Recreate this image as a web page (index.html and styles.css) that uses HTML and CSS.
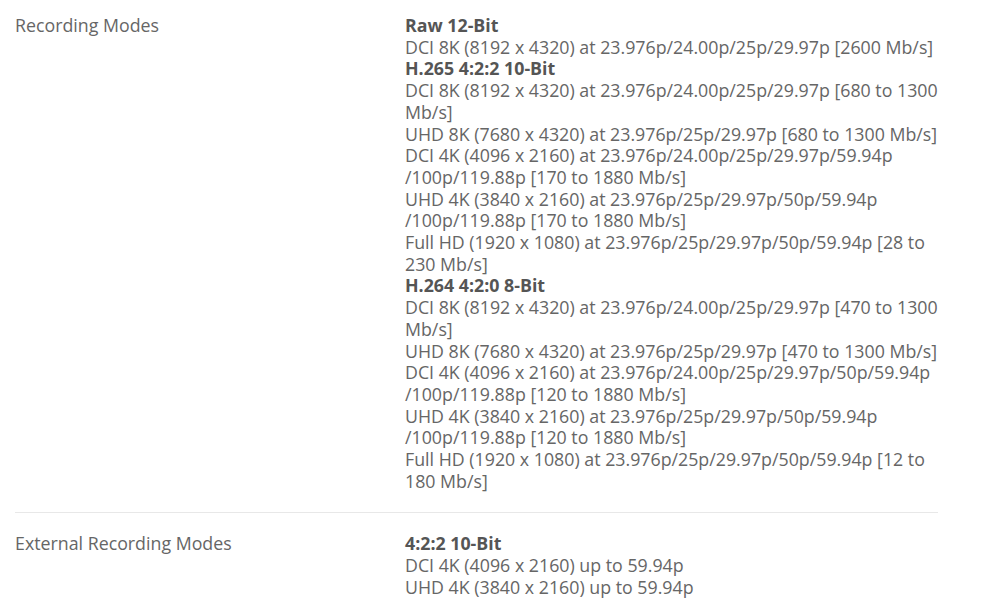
FILE: index.html
```html
<!DOCTYPE html>
<html>
<head>
<meta charset="utf-8">
<link rel="stylesheet" href="styles.css">
</head>
<body>
<div class="specs">
  <div class="row">
    <div class="label">Recording Modes</div>
    <div class="value">
      <strong>Raw 12-Bit</strong><br>
      DCI 8K (8192 x 4320) at 23.976p/24.00p/25p/29.97p [2600 Mb/s]<br>
      <strong>H.265 4:2:2 10-Bit</strong><br>
      DCI 8K (8192 x 4320) at 23.976p/24.00p/25p/29.97p [680 to 1300<br>Mb/s]<br>
      UHD 8K (7680 x 4320) at 23.976p/25p/29.97p [680 to 1300 Mb/s]<br>
      DCI 4K (4096 x 2160) at 23.976p/24.00p/25p/29.97p/59.94p<br>/100p/119.88p [170 to 1880 Mb/s]<br>
      UHD 4K (3840 x 2160) at 23.976p/25p/29.97p/50p/59.94p<br>/100p/119.88p [170 to 1880 Mb/s]<br>
      Full HD (1920 x 1080) at 23.976p/25p/29.97p/50p/59.94p [28 to<br>230 Mb/s]<br>
      <strong>H.264 4:2:0 8-Bit</strong><br>
      DCI 8K (8192 x 4320) at 23.976p/24.00p/25p/29.97p [470 to 1300<br>Mb/s]<br>
      UHD 8K (7680 x 4320) at 23.976p/25p/29.97p [470 to 1300 Mb/s]<br>
      DCI 4K (4096 x 2160) at 23.976p/24.00p/25p/29.97p/50p/59.94p<br>/100p/119.88p [120 to 1880 Mb/s]<br>
      UHD 4K (3840 x 2160) at 23.976p/25p/29.97p/50p/59.94p<br>/100p/119.88p [120 to 1880 Mb/s]<br>
      Full HD (1920 x 1080) at 23.976p/25p/29.97p/50p/59.94p [12 to<br>180 Mb/s]
    </div>
  </div>
  <div class="row">
    <div class="label">External Recording Modes</div>
    <div class="value">
      <strong>4:2:2 10-Bit</strong><br>
      DCI 4K (4096 x 2160) up to 59.94p<br>
      UHD 4K (3840 x 2160) up to 59.94p
    </div>
  </div>
</div>
</body>
</html>
```
FILE: styles.css
```css
html, body {
  margin: 0;
  padding: 0;
  background: #fff;
}
body {
  font-family: "Open Sans", "Liberation Sans", sans-serif;
  font-size: 17.8px;
  line-height: 21.7px;
  color: #666;
}
.specs {
  width: 923px;
  margin-left: 15px;
}
.row {
  display: flex;
  padding: 15px 0 20px;
  border-bottom: 1px solid #e8e8e8;
}
.row + .row {
  padding-top: 20px;
}
.label {
  width: 390px;
  flex: none;
}
.value {
  flex: 1;
  white-space: nowrap;
}
.value strong {
  font-weight: 700;
  color: #555;
}
```
